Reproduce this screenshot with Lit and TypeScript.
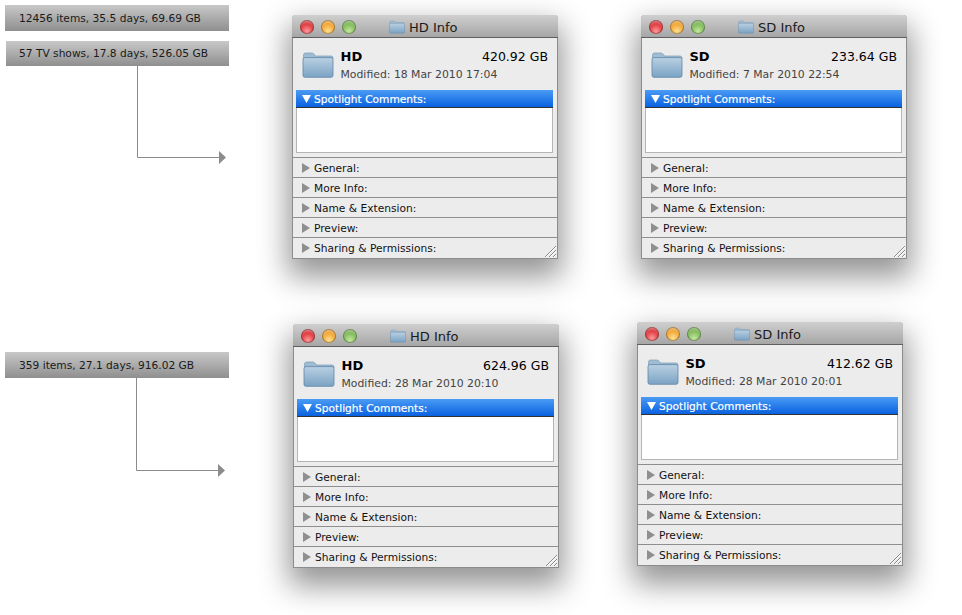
import { LitElement, html, css, svg } from "lit";
import { customElement, property } from "lit/decorators.js";

const folder = (w: number, h: number) => html`<svg width=${w} height=${h} viewBox="0 0 32 26" class="folder">
  <defs><linearGradient id="fg" x1="0" y1="0" x2="0" y2="1"><stop offset="0" stop-color="#b9d0e2"/><stop offset="1" stop-color="#7ba3c4"/></linearGradient></defs>
  <path d="M1.5 7 L1.5 3 Q1.5 1 3.5 1 L10 1 Q11.5 1 12.5 2.5 L13.5 4 L29 4 Q31 4 31 6 L31 7 Z" fill="#9fbcd3" stroke="#7d9cb6" stroke-width=".7"/>
  <path d="M1 7.5 Q1 5.6 3 5.6 L29 5.6 Q31 5.6 31 7.5 L31 23.5 Q31 25.3 29 25.3 L3 25.3 Q1 25.3 1 23.5 Z" fill="url(#fg)" stroke="#5f87a8" stroke-width=".8"/>
</svg>`;

@customElement("info-window")
class InfoWindow extends LitElement {
  @property() name = "";
  @property() size = "";
  @property() modified = "";
  static styles = css`
    :host { display: block; position: absolute; width: 266px; height: 244px; box-sizing: border-box;
      font: 10.65px "DejaVu Sans", sans-serif; color: #111; background: #ececec;
      border: 1px solid #8c8c8c; border-top: none;
      box-shadow: 0 14px 30px 4px rgba(0,0,0,.42); border-radius: 4px 4px 0 0; }
    .title { height: 22px; margin: 0 -1px; display: flex; align-items: center; position: relative;
      background: linear-gradient(#cfcfcf, #a6a6a6); border-bottom: 1px solid #5f5f5f; border-radius: 4px 4px 0 0; box-sizing: content-box; }
    .lights { display: flex; gap: 7px; padding: 2px 0 0 8px; }
    .light { width: 14px; height: 14px; border-radius: 50%; box-shadow: inset 0 0 0 1px rgba(0,0,0,.3), inset 0 4px 3px -2px rgba(255,255,255,.55); }
    .r { background: radial-gradient(circle at 50% 80%, #ff9a9a, #d8262b 65%, #b01a1e); }
    .o { background: radial-gradient(circle at 50% 80%, #ffe08f, #ef9a22 65%, #c97818); }
    .g { background: radial-gradient(circle at 50% 80%, #c3e8a0, #73b14a 65%, #4f8f30); }
    .tt { position: absolute; left: 97px; top: 1px; height: 22px; display: flex; align-items: center; gap: 4px; font-size: 13px; color: #1a1a1a; }
    .head { height: 52px; display: flex; box-sizing: border-box; padding: 11px 9px 0 9px; gap: 6.5px; }
    .head .txt { flex: 1; }
    .l1 { display: flex; justify-content: space-between; font-size: 12.5px; line-height: 16px; color: #000; }
    .l1 b { font-size: 13px; }
    .l2 { color: #444; font-size: 10.85px; line-height: 16px; margin-top: 2px; }
    .folder { display: block; flex: none; }
    .head .folder { margin-top: 3px; }
    .panel { margin: 0 4px 0 3px; }
    .blue { box-sizing: content-box; background: linear-gradient(#4a9bf4, #0a62e0); color: #fff; display: flex; align-items: center; gap: 3px; padding: 1px 0 0 6px; height: 16px; border-bottom: 1px solid #333; -webkit-text-stroke: .2px #fff; }
    .box { height: 45px; background: #fff; border: 1px solid #b5b5b5; border-top: none; box-sizing: border-box; }
    .sp { height: 4px; }
    .row { height: 20px; box-sizing: border-box; border-top: 1px solid #8e8e8e; display: flex; align-items: center; gap: 4px; padding: 1px 0 0 9px; }
    .row:last-of-type { height: 21px; padding-bottom: 1px; }
    .tri { flex: none; display: block; }
    .grip { position: absolute; right: 0; bottom: 0; }
  `;
  render() {
    return html`
      <div class="title">
        <div class="lights"><div class="light r"></div><div class="light o"></div><div class="light g"></div></div>
        <div class="tt">${folder(16, 14)}<span>${this.name} Info</span></div>
      </div>
      <div class="head">
        ${folder(32, 26)}
        <div class="txt">
          <div class="l1"><b>${this.name}</b><span>${this.size}</span></div>
          <div class="l2">Modified: ${this.modified}</div>
        </div>
      </div>
      <div class="panel">
        <div class="blue"><svg width="9" height="8" viewBox="0 0 9 8"><path d="M0 0H9L4.5 8Z" fill="#fff"/></svg><span>Spotlight Comments:</span></div>
        <div class="box"></div>
      </div>
      <div class="sp"></div>
      ${["General:", "More Info:", "Name & Extension:", "Preview:", "Sharing & Permissions:"].map(t => html`
        <div class="row"><svg class="tri" width="8" height="10" viewBox="0 0 8 10"><path d="M0 0L8 5L0 10Z" fill="#8f8f8f"/></svg><span>${t}</span></div>`)}
      <svg class="grip" width="13" height="13" viewBox="0 0 13 13">
        ${svg`<path d="M1 12L12 1M5 12L12 5M9 12L12 9" stroke="#8a8a8a" stroke-width="1"/><path d="M2 12L12 2M6 12L12 6M10 12L12 10" stroke="#fff" stroke-width="1"/>`}
      </svg>`;
  }
}

@customElement("app-root")
class AppRoot extends LitElement {
  static styles = css`
    :host { display: block; position: relative; width: 962px; height: 615px; background: #fff; overflow: hidden; font-family: "DejaVu Sans", sans-serif; }
    .bar { position: absolute; box-sizing: border-box; display: flex; align-items: center; font-size: 10.65px; color: #1a1a1a;
      background: linear-gradient(#c8c8c8, #8f8f8f); }
    .a { left: 5px; top: 5px; width: 224px; height: 26px; padding-left: 14px; }
    .b { left: 6px; top: 41px; width: 223px; height: 25px; padding-left: 13px; }
    .c { left: 5px; top: 352px; width: 224px; height: 26px; padding-left: 14px; }
    .arrow { position: absolute; left: 0; top: 0; }
    .w1 { left: 292px; top: 15px; }
    .w2 { left: 641px; top: 15px; }
    .w3 { left: 293px; top: 324px; }
    .w4 { left: 637px; top: 322px; }
  `;
  render() {
    return html`
      <div class="bar a">12456 items, 35.5 days, 69.69 GB</div>
      <div class="bar b">57 TV shows, 17.8 days, 526.05 GB</div>
      <div class="bar c">359 items, 27.1 days, 916.02 GB</div>
      <svg class="arrow" width="240" height="500" viewBox="0 0 240 500">
        <path d="M137.5 66V157.5H220M136.5 378V470.5H219" fill="none" stroke="#8c8c8c"/>
        <path d="M219 151L226 157.5L219 164ZM218 464L225 470.5L218 477Z" fill="#8c8c8c"/>
      </svg>
      <info-window class="w1" name="HD" size="420.92 GB" modified="18 Mar 2010 17:04"></info-window>
      <info-window class="w2" name="SD" size="233.64 GB" modified="7 Mar 2010 22:54"></info-window>
      <info-window class="w3" name="HD" size="624.96 GB" modified="28 Mar 2010 20:10"></info-window>
      <info-window class="w4" name="SD" size="412.62 GB" modified="28 Mar 2010 20:01"></info-window>`;
  }
}
